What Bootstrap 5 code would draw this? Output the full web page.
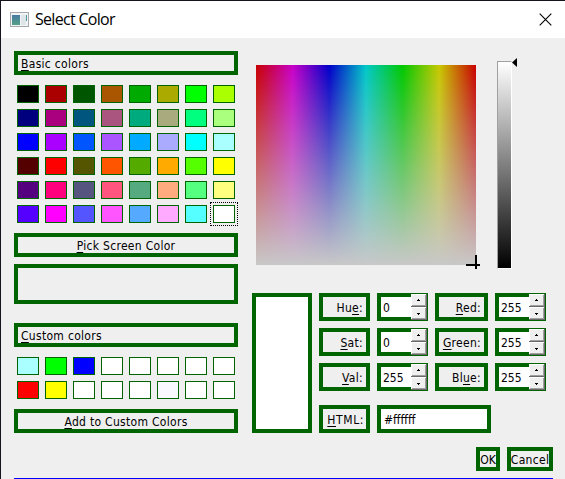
<!DOCTYPE html>
<html lang="en">
<head>
<meta charset="utf-8">
<title>Select Color</title>
<link href="https://cdn.jsdelivr.net/npm/bootstrap@5.3.0/dist/css/bootstrap.min.css" rel="stylesheet">
<style>
html, body { height: 100%; overflow: hidden; }
body { font: 12px/16px "DejaVu Sans Condensed", "DejaVu Sans", sans-serif; font-stretch: condensed; color: #000; background: #efefef; letter-spacing: .3px; }
.dialog { width: 565px; height: 479px; border-left: 1px solid #17131a; border-top: 1px solid #17131a; overflow: hidden; }
.titlebar { height: 37px; padding: 0 13px 0 9px; }
.titlebar h1 { font: 16px/20px "Open Sans", "Noto Sans", sans-serif; letter-spacing: -.7px; margin: 0 0 0 5px; padding-bottom: 1px; }
.content-area { padding: 13px 12px 0 13px; height: 440px; }
.boxed { border: 4px solid #006400; border-radius: 0; background: #efefef; color: #000; padding: 0; height: 24px; white-space: nowrap; font: inherit; letter-spacing: inherit; }
.boxed u { text-underline-offset: 2px; text-decoration-thickness: 1px; text-decoration-skip-ink: none; }
.left-col { width: 224px; }
.section-label { padding-left: 3px; line-height: 18px; }
.push-btn { display: flex; justify-content: center; align-items: center; line-height: 16px; padding-top: 2px; }
.well { display: grid; grid-template-columns: repeat(8, 28px); grid-auto-rows: 24px; margin: 7px 0; }
.well-cell { display: flex; padding: 3px; }
.well-cell.chosen { border: 1px dotted #000; padding: 2px; }
.swatch { flex: 1; border: 1px solid #006400; }
.blank-box { height: 40px; margin: 7px 0 19px; }
.right-col { width: 302px; margin-left: 14px; }
.picker-row { height: 242px; }
.hue-field { width: 220px; height: 200px; margin: 14px 0 0 4px; background: linear-gradient(to bottom, rgba(200,200,200,0), #c8c8c8), linear-gradient(to right, #c80000, #c800c8, #0000c8, #00c8c8, #00c800, #c8c800, #c80000); }
.crosshair { right: -4px; bottom: -4px; }
.value-bar { width: 15px; height: 208px; margin: 10px 0 0 21px; border: 1px solid #fff; border-left-color: #a0a0a0; border-top-color: #a0a0a0; background: linear-gradient(#fff, #000); }
.value-arrow { margin-top: 7px; }
.fields { display: grid; grid-template-columns: 60px 51px 51px 53px 51px; grid-template-rows: repeat(4, 28px); gap: 7px; }
.fields .boxed { height: 28px; }
.fields .preview { grid-row: 1 / 5; height: 140px; background: #fff; }
.field-label { text-align: right; padding-right: 3px; line-height: 22px; }
.row-html { margin-top: 7px; }
.spin { display: flex; background: #fff; position: relative; line-height: 22px; padding-left: 2px; letter-spacing: 0; }
.spin-buttons { position: absolute; right: -3px; top: -3px; width: 16px; height: 26px; }
.html-value { grid-column: 3 / 5; width: 114px; background: #fff; padding-left: 3px; line-height: 22px; letter-spacing: 0; }
.html-label { letter-spacing: .6px; padding-right: 2px; }
.actions { gap: 7px; margin-top: 14px; }
.btn-ok { width: 24px; letter-spacing: 0; }
.btn-cancel { width: 46px; }
.foot-line { height: 1px; background: #0000ff; margin-top: 7px; }
</style>
</head>
<body>
<main class="dialog">
  <header class="titlebar bg-white d-flex align-items-center">
    <svg width="20" height="16" viewBox="0 0 20 16" shape-rendering="crispEdges">
      <defs><linearGradient id="ico" x2="0" y2="1"><stop stop-color="#4779a5"/><stop offset="1" stop-color="#55a184"/></linearGradient></defs>
      <path fill="#a5a9ad" d="M0 0h19v15H0z"/><path fill="#f1f3f4" d="M1 1h17v13H1z"/>
      <path fill="url(#ico)" d="M2 3h8v10H2z"/><path fill="#dfe6e9" d="M11 3h5v10h-5z"/><path fill="#4d9a9b" d="M16 3h1v6h-1z"/>
    </svg>
    <h1>Select Color</h1>
    <svg class="ms-auto" width="13" height="13" viewBox="0 0 13 13"><path d="M.7.7l11.6 11.6M12.3.7L.7 12.3" stroke="#000" stroke-width="1.1"/></svg>
  </header>
  <div class="content-area">
    <div class="d-flex">
      <section class="left-col">
        <div class="boxed section-label"><u>B</u>asic colors</div>
        <div class="well" id="basic"></div>
        <button type="button" class="boxed push-btn w-100"><span><u>P</u>ick Screen Color</span></button>
        <div class="boxed blank-box"></div>
        <div class="boxed section-label"><u>C</u>ustom colors</div>
        <div class="well" id="custom"></div>
        <button type="button" class="boxed push-btn w-100"><span><u>A</u>dd to Custom Colors</span></button>
      </section>
      <section class="right-col">
        <div class="picker-row d-flex align-items-start">
          <div class="hue-field position-relative">
            <svg class="crosshair position-absolute" width="14" height="14" shape-rendering="crispEdges"><path d="M0 9h14v2H0zM9 0h2v14H9z"/></svg>
          </div>
          <div class="value-bar"></div>
          <svg class="value-arrow" width="5" height="9"><path d="M5 0v9L0 4.5z"/></svg>
        </div>
        <div class="fields">
          <div class="boxed preview"></div>
          <div class="boxed field-label">Hu<u>e</u>:</div><div class="boxed spin">0</div>
          <div class="boxed field-label"><u>R</u>ed:</div><div class="boxed spin">255</div>
          <div class="boxed field-label"><u>S</u>at:</div><div class="boxed spin">0</div>
          <div class="boxed field-label"><u>G</u>reen:</div><div class="boxed spin">255</div>
          <div class="boxed field-label"><u>V</u>al:</div><div class="boxed spin">255</div>
          <div class="boxed field-label">Bl<u>u</u>e:</div><div class="boxed spin">255</div>
          <div class="boxed field-label html-label row-html"><u>H</u>TML:</div><div class="boxed html-value row-html">#ffffff</div>
        </div>
      </section>
    </div>
    <div class="actions d-flex justify-content-end">
      <button type="button" class="boxed push-btn btn-ok">OK</button>
      <button type="button" class="boxed push-btn btn-cancel">Cancel</button>
    </div>
    <div class="foot-line"></div>
  </div>
</main>
<script src="https://cdn.jsdelivr.net/npm/bootstrap@5.3.0/dist/js/bootstrap.bundle.min.js"></script>
<script>
function addCell(parent, color, chosen) {
  const cell = document.createElement('div');
  cell.className = 'well-cell' + (chosen ? ' chosen' : '');
  const s = document.createElement('div');
  s.className = 'swatch';
  s.style.backgroundColor = color;
  cell.append(s);
  parent.append(cell);
}
// Standard palette runs down the columns: blue fastest, then red, then green.
for (let row = 0; row < 6; row++) for (let col = 0; col < 8; col++) {
  const i = col * 6 + row;
  const b = i % 3, r = Math.floor(i / 3) % 4, g = Math.floor(i / 12);
  addCell(document.getElementById('basic'), `rgb(${r * 85},${g * 85},${Math.floor(b * 127.5)})`, i === 47);
}
['#aaffff', '#00ff00', '#0000ff', '#fff', '#fff', '#fff', '#fff', '#fff',
 '#ff0000', '#ffff00', '#fff', '#fff', '#fff', '#faf8ff', '#fff', '#fff']
  .forEach(c => addCell(document.getElementById('custom'), c, false));
// Up and down stepper buttons with a raised bevel.
const stepper = y => `<g transform="translate(0 ${y})"><path fill="#696969" d="M0 0h16v13H0z"/><path fill="#fff" d="M0 0h15v12H0z"/><path fill="#a0a0a0" d="M1 1h14v11H1z"/><path fill="#efefef" d="M1 1h13v10H1z"/></g>`;
document.querySelectorAll('.spin').forEach(el => el.insertAdjacentHTML('beforeend',
  `<svg class="spin-buttons" viewBox="0 0 16 26" shape-rendering="crispEdges">${stepper(0)}${stepper(13)}<path d="M7 5h1v1h1v1H6V6h1zM6 19h3v1H8v1H7v-1H6z"/></svg>`));
</script>
</body>
</html>
